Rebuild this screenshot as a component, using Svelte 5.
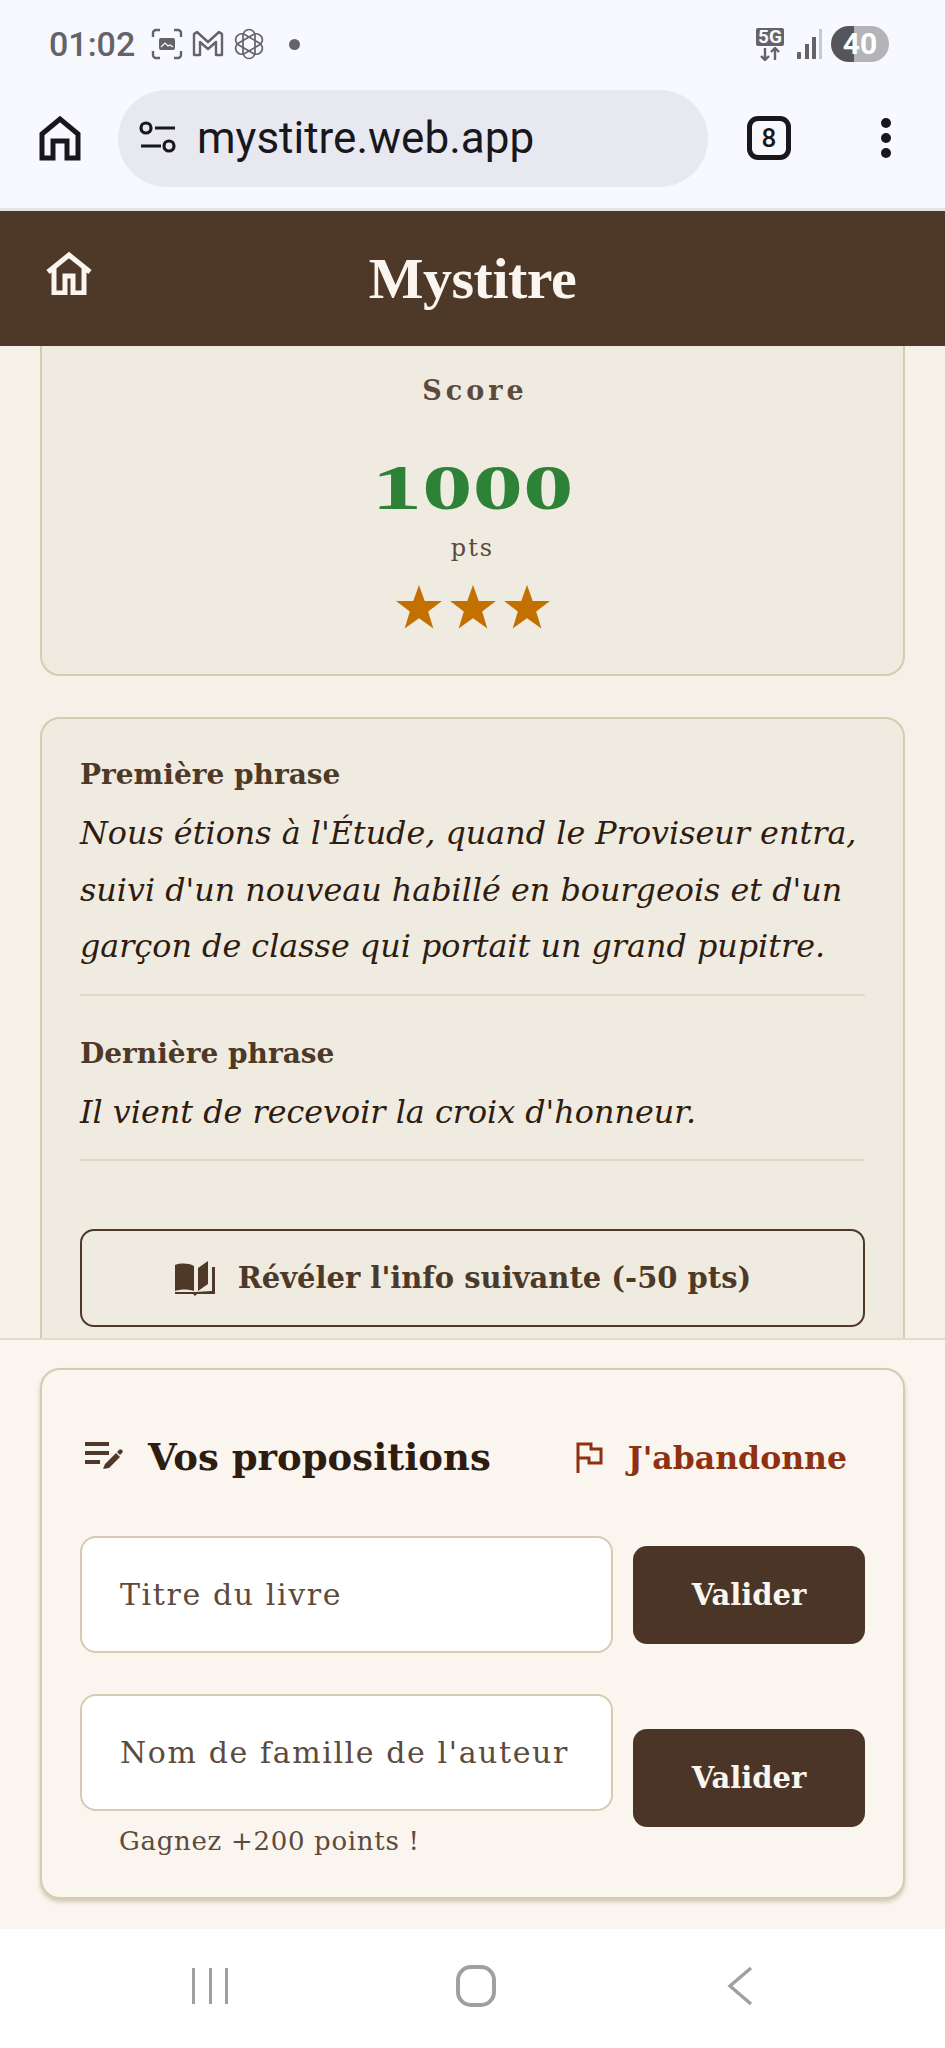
<script lang="ts">
  const stars = [1, 2, 3];
</script>

<div class="phone">
  <div class="statusbar">
    <span class="time">01:02</span>
    <svg class="st-icon" width="32" height="32" viewBox="0 0 32 32" fill="none" stroke="#636368" stroke-width="2.4">
      <path d="M2 9V5a3 3 0 0 1 3-3h4M23 2h4a3 3 0 0 1 3 3v4M30 23v4a3 3 0 0 1-3 3h-4M9 30H5a3 3 0 0 1-3-3v-4" />
      <rect x="8" y="10" width="16" height="12" rx="2" fill="#636368" stroke="none" />
      <path d="M10 19l4-4 3 3 2-1 3 2" stroke="#f8f8ff" stroke-width="1.2" />
    </svg>
    <svg class="st-icon" width="34" height="28" viewBox="0 0 32 28" fill="none" stroke="#636368" stroke-width="2.4" stroke-linejoin="round">
      <path d="M2 25V4l3-2 11 10L27 2l3 2v21h-6V12l-8 7-8-7v13z" />
    </svg>
    <svg class="st-icon" width="32" height="32" viewBox="0 0 32 32" fill="none" stroke="#636368" stroke-width="1.7">
      {#each [0, 60, 120] as a}
        <rect x="10" y="1.5" width="12" height="29" rx="6" transform="rotate({a} 16 16)" />
      {/each}
    </svg>
    <span class="dot"></span>
    <span class="spacer"></span>
    <div class="net">
      <span class="fiveg">5G</span>
      <svg width="28" height="14" viewBox="0 0 28 14" fill="none" stroke="#636368" stroke-width="2.4">
        <path d="M9 1v12M5 9l4 4 4-4M19 13V1M15 5l4-4 4 4" />
      </svg>
    </div>
    <svg class="signal" width="26" height="32" viewBox="0 0 26 32">
      <rect x="1" y="24" width="4" height="7" rx="1" fill="#636368" />
      <rect x="9" y="16" width="4" height="15" fill="#636368" />
      <rect x="16" y="9" width="4" height="22" fill="#636368" />
      <rect x="23" y="1" width="3" height="30" fill="#c9c9cf" />
    </svg>
    <span class="battery">40</span>
  </div>

  <div class="browserbar">
    <svg class="b-home" width="44" height="46" viewBox="0 0 44 46" fill="none" stroke="#17171c" stroke-width="5" stroke-linejoin="miter">
      <path d="M4 43V19L22 4l18 15v24H29V26H15v17z" />
    </svg>
    <div class="urlbar">
      <svg width="38" height="34" viewBox="0 0 38 34" fill="none" stroke="#17171c" stroke-width="3.2">
        <circle cx="7" cy="7" r="5" />
        <path d="M16 7h20M2 25h20" />
        <circle cx="30" cy="25" r="5" />
      </svg>
      <span class="url">mystitre.web.app</span>
    </div>
    <div class="tabs">8</div>
    <div class="menu"><span></span><span></span><span></span></div>
  </div>

  <header class="appbar">
    <svg class="a-home" width="48" height="44" viewBox="0 0 48 44" fill="none" stroke="#faf5ef" stroke-width="5">
      <path d="M3 21L24 4l21 17M9 17v25h11V25h8v17h11V17" />
    </svg>
    <h1>Mystitre</h1>
  </header>

  <main class="scroller">
    <div class="content">
      <section class="card score">
        <div class="score-label">Score</div>
        <div class="score-value">1000</div>
        <div class="score-unit">pts</div>
        <div class="stars">
          {#each stars as s}
            <svg width="46" height="44" viewBox="0 0 24 23"><path d="M12 0l3 8.4h9l-7.2 5.4 2.7 9L12 17.4l-7.5 5.4 2.7-9L0 8.4h9z" fill="#c27100" /></svg>
          {/each}
        </div>
      </section>

      <section class="card clues">
        <div class="clue">
          <h3>Première phrase</h3>
          <p>Nous étions à l'Étude, quand le Proviseur entra, suivi d'un nouveau habillé en bourgeois et d'un garçon de classe qui portait un grand pupitre.</p>
        </div>
        <div class="clue">
          <h3>Dernière phrase</h3>
          <p>Il vient de recevoir la croix d'honneur.</p>
        </div>
        <button class="reveal">
          <svg width="42" height="36" viewBox="0 0 42 36" fill="#4e3928">
            <path d="M1 5c6-2 13-2 19 1v25c-6-2-13-2-19 0z" />
            <path d="M24 8l10-7v23l-10 7z" />
            <path d="M38 7h3v27H23l-2 2-2-2H1v-2h20l17-1z" />
          </svg>
          Révéler l'info suivante (-50 pts)
        </button>
      </section>
    </div>
  </main>

  <section class="panel">
    <div class="card form">
      <div class="form-head">
        <svg class="lines" width="40" height="34" viewBox="0 0 40 34" fill="#4e3928">
          <rect x="1" y="2" width="24" height="4" />
          <rect x="1" y="11" width="24" height="4" />
          <rect x="1" y="20" width="15" height="4" />
          <path d="M19 29l2-5 11-11 4 4-11 11zM33 12l2-2c1-1 2-1 3 0s1 2 0 3l-2 2z" />
        </svg>
        <h2>Vos propositions</h2>
        <button class="giveup">
          <svg width="28" height="32" viewBox="0 0 28 32" fill="none" stroke="#8f3110" stroke-width="3">
            <path d="M3 32V3h13v5h10v14H14v-5H3" />
          </svg>
          J'abandonne
        </button>
      </div>
      <div class="row">
        <div class="field">
          <input type="text" placeholder="Titre du livre" />
        </div>
        <button class="validate">Valider</button>
      </div>
      <div class="row">
        <div class="field">
          <input type="text" placeholder="Nom de famille de l'auteur" />
          <small>Gagnez +200 points !</small>
        </div>
        <button class="validate">Valider</button>
      </div>
    </div>
  </section>

  <nav class="navbar">
    <svg width="40" height="38" viewBox="0 0 40 38" fill="#a0a0a4">
      <rect x="2" y="1" width="3" height="36" /><rect x="19" y="1" width="3" height="36" /><rect x="35" y="1" width="3" height="36" />
    </svg>
    <svg class="nav-home" width="40" height="42" viewBox="0 0 40 42" fill="none" stroke="#a0a0a4" stroke-width="4">
      <rect x="2" y="2" width="36" height="38" rx="13" />
    </svg>
    <svg width="26" height="40" viewBox="0 0 26 40" fill="none" stroke="#a0a0a4" stroke-width="3.4">
      <path d="M24 2L3 20l21 18" />
    </svg>
  </nav>
</div>

<style>
  :global(body) {
    margin: 0;
    background: #f8f8ff;
  }

  .phone {
    width: 945px;
    height: 2048px;
    display: flex;
    flex-direction: column;
    overflow: hidden;
    font-family: "DejaVu Serif", "Liberation Serif", serif;
    background: #f5f0e8;
  }

  .statusbar {
    height: 80px;
    box-sizing: border-box;
    padding: 8px 56px 0 49px;
    display: flex;
    align-items: center;
    background: #f8f8ff;
    font-family: Roboto, sans-serif;
    flex: none;
  }

  .time {
    font-size: 34px;
    font-weight: 500;
    color: #636368;
    margin-right: 16px;
  }

  .st-icon {
    margin-right: 8px;
  }

  .dot {
    width: 11px;
    height: 11px;
    border-radius: 50%;
    background: #636368;
    margin-left: 16px;
  }

  .spacer {
    flex: 1;
  }

  .net {
    display: flex;
    flex-direction: column;
    align-items: center;
    margin-right: 12px;
  }

  .fiveg {
    background: #636368;
    color: #f8f8ff;
    font-size: 19px;
    font-weight: 700;
    line-height: 18px;
    padding: 0 2px;
    border-radius: 2px;
    margin-bottom: 1px;
  }

  .signal {
    margin-right: 9px;
  }

  .battery {
    width: 58px;
    height: 36px;
    border-radius: 18px;
    background: linear-gradient(90deg, #55555a 0 40%, #b3b3b8 40% 100%);
    color: #fff;
    font-size: 30px;
    font-weight: 700;
    line-height: 36px;
    text-align: center;
  }

  .browserbar {
    flex: none;
    display: flex;
    align-items: center;
    background: #f8f8ff;
    padding-bottom: 12px;
    box-sizing: border-box;
    border-bottom: 3px solid #e6e3e6;
    height: 131px;
    font-family: Roboto, sans-serif;
  }

  .b-home {
    margin-left: 38px;
  }

  .urlbar {
    margin-left: 36px;
    width: 590px;
    height: 97px;
    border-radius: 49px;
    background: #e8e8f0;
    display: flex;
    align-items: center;
    padding-left: 21px;
    box-sizing: border-box;
    gap: 20px;
  }

  .url {
    font-size: 44px;
    color: #17171c;
  }

  .tabs {
    margin-left: 39px;
    width: 44px;
    height: 44px;
    border: 5px solid #17171c;
    border-radius: 11px;
    box-sizing: border-box;
    color: #17171c;
    font-size: 26px;
    font-weight: 500;
    line-height: 34px;
    text-align: center;
  }

  .menu {
    margin-left: 90px;
    display: flex;
    flex-direction: column;
    gap: 5px;
  }

  .menu span {
    width: 10px;
    height: 10px;
    border-radius: 50%;
    background: #17171c;
  }

  .appbar {
    height: 135px;
    flex: none;
    background: #4e3928;
    display: flex;
    align-items: center;
    justify-content: center;
    position: relative;
  }

  .a-home {
    position: absolute;
    left: 45px;
    top: 40px;
  }

  h1 {
    margin: 0 0 1px;
    font-family: "Liberation Serif", serif;
    font-size: 58px;
    letter-spacing: -0.5px;
    font-weight: 700;
    color: #faf5ef;
  }

  .scroller {
    flex: 1;
    min-height: 0;
    overflow: hidden;
  }

  .content {
    margin-top: -40px;
    padding: 0 40px;
    display: flex;
    flex-direction: column;
    gap: 41px;
  }

  .card {
    border: 2px solid #d6cbb0;
    border-radius: 20px;
    background: #f0ebe0;
    box-sizing: border-box;
  }

  .score {
    height: 370px;
    text-align: center;
    color: #5c4a3c;
  }

  .score-label {
    margin-top: 66px;
    padding-left: 5px;
    font-size: 27px;
    line-height: 34px;
    font-weight: 700;
    letter-spacing: 4px;
  }

  .score-value {
    margin-top: 50px;
    font-family: "Liberation Serif", serif;
    font-size: 64px;
    line-height: 60px;
    font-weight: 700;
    color: #2e8238;
    transform: scaleX(1.58);
  }

  .score-unit {
    font-size: 24px;
    line-height: 32px;
    margin-top: 14px;
    letter-spacing: 2px;
  }

  .stars {
    margin-top: 21px;
    display: flex;
    justify-content: center;
    gap: 8px;
  }

  .clues {
    padding: 34px 38px 0;
    height: 700px;
  }

  .clue {
    border-bottom: 2px solid #e0d9ca;
    padding-bottom: 19px;
    margin-bottom: 36px;
  }

  .clue h3 {
    margin: 0;
    font-size: 28px;
    line-height: 44px;
    font-weight: 700;
    color: #4e3928;
  }

  .clue p {
    margin: 8px 0 0;
    font-size: 31.8px;
    font-style: italic;
    line-height: 56.5px;
    color: #2e1c10;
  }

  .reveal {
    width: 100%;
    height: 98px;
    margin-top: 68px;
    padding: 0 20px 0 0;
    border: 2.5px solid #4e3928;
    border-radius: 14px;
    background: transparent;
    color: #4e3928;
    font-family: inherit;
    font-size: 29px;
    font-weight: 700;
    display: flex;
    align-items: center;
    justify-content: center;
    gap: 22px;
  }

  .panel {
    flex: none;
    height: 591px;
    box-sizing: border-box;
    border-top: 2px solid #e3dcc8;
    background: #faf5ef;
    padding: 28px 40px 0;
  }

  .form {
    height: 531px;
    background: #faf5ef;
    padding: 0 38px;
    box-shadow: 0 3px 4px rgba(120, 100, 60, 0.3);
  }

  .form-head {
    height: 166px;
    box-sizing: border-box;
    padding-top: 8px;
    display: flex;
    align-items: center;
  }

  .lines {
    margin-left: 4px;
    margin-right: 24px;
  }

  h2 {
    margin: 0;
    flex: 1;
    font-size: 37px;
    font-weight: 700;
    color: #2e1c10;
    white-space: nowrap;
  }

  .giveup {
    border: none;
    background: none;
    padding: 0;
    margin-right: 18px;
    font-family: inherit;
    font-size: 31.5px;
    font-weight: 700;
    color: #8f3110;
    display: flex;
    align-items: center;
    gap: 25px;
    white-space: nowrap;
  }

  .row {
    display: flex;
    align-items: center;
    gap: 20px;
    margin-bottom: 41px;
  }

  .field {
    width: 533px;
    flex: none;
  }

  input {
    width: 100%;
    height: 117px;
    box-sizing: border-box;
    border: 2px solid #d6cbb0;
    border-radius: 16px;
    background: #fff;
    padding: 0 38px;
    font-family: inherit;
    font-size: 30px;
    letter-spacing: 1.6px;
  }

  input::placeholder {
    color: #5c4a3c;
    opacity: 1;
  }

  small {
    display: block;
    height: 50px;
    line-height: 60px;
    padding-left: 39px;
    font-size: 26px;
    letter-spacing: 0.7px;
    color: #5c4a3c;
  }

  .validate {
    flex: 1;
    height: 98px;
    border: none;
    border-radius: 14px;
    background: #4a3526;
    color: #faf5ef;
    font-family: inherit;
    font-size: 29px;
    font-weight: 700;
  }

  .navbar {
    flex: none;
    height: 119px;
    box-sizing: border-box;
    background: #fff;
    display: flex;
    align-items: center;
    justify-content: space-between;
    padding: 0 192px 6px 190px;
  }

  .nav-home {
    margin-right: 6px;
  }
</style>
